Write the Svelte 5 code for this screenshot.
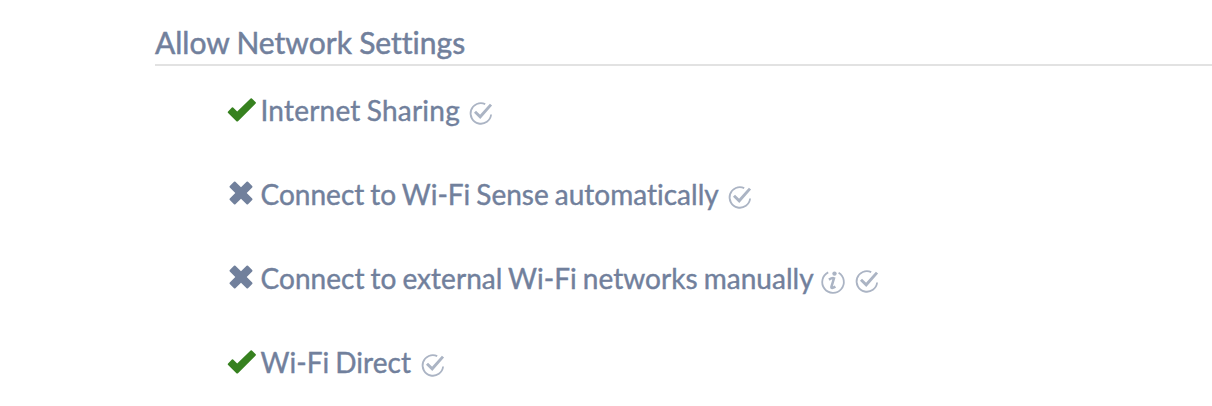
<script>
	const title = 'Allow Network Settings';

	let settings = [
		{ label: 'Internet Sharing', tracking: 0.22, allowed: true, info: false },
		{ label: 'Connect to Wi-Fi Sense automatically', tracking: 0.01, allowed: false, info: false },
		{ label: 'Connect to external Wi-Fi networks manually', tracking: 0.04, allowed: false, info: true },
		{ label: 'Wi-Fi Direct', tracking: 0.05, allowed: true, info: false }
	];
</script>

<section>
	<h2>{title}</h2>
	<ul>
		{#each settings as setting (setting.label)}
			<li>
				{#if setting.allowed}
					<svg class="state yes" viewBox="0 0 32 28">
						<path d="M1.1 15.4 4.9 11.6Q5.5 11.1 6.1 11.6L10.2 15.4 23.6 2.5Q24.3 1.9 24.9 2.5L28.7 6.2Q29.2 6.8 28.7 7.4L11 25.2Q10.2 26 9.4 25.2L1.1 16.9Q.4 16.1 1.1 15.4Z" />
					</svg>
				{:else}
					<svg class="state no" viewBox="0 0 32 28">
						<path d="M7 1.8Q7.7 1.1 8.4 1.8L14 7.3 19.6 1.8Q20.3 1.1 21 1.8L25.2 6Q25.9 6.7 25.2 7.4L19.7 13 25.2 18.6Q25.9 19.3 25.2 20L21 24.2Q20.3 24.9 19.6 24.2L14 18.7 8.4 24.2Q7.7 24.9 7 24.2L2.8 20Q2.1 19.3 2.8 18.6L8.3 13 2.8 7.4Q2.1 6.7 2.8 6Z" />
					</svg>
				{/if}
				<span class="label" style="letter-spacing: {setting.tracking}px">{setting.label}</span>
				{#if setting.info}
					<svg class="hint info" viewBox="0 0 24 24">
						<path class="ring" d="M7.2 2.4A10.8 10.8 0 1 0 17.6 2.8" />
						<circle cx="13.5" cy="3.6" r="2.2" />
						<path class="stem" d="M7.9 9.6Q11.3 7.6 13 8.3L10.4 16.8Q10 19.2 14.4 16.6" />
					</svg>
				{/if}
				<svg class="hint" viewBox="0 0 24 24">
					<path class="ring" d="M16.2 2.1A10.3 10.3 0 1 0 22.1 12.5" />
					<path class="tick" d="M6 9.8 11.2 14.8 22 2.6" />
				</svg>
			</li>
		{/each}
	</ul>
</section>

<style>
	:global(body) {
		background: #fff;
	}

	section {
		padding: 25px 0 0 155px;
		font-family: Lato, "Open Sans", sans-serif;
		font-variant-ligatures: none;
		color: #71809c;
	}

	h2 {
		margin: 0;
		height: 39px;
		border-bottom: 2px solid #e2e2e2;
		font-size: 30px;
		line-height: 34px;
		font-weight: 400;
		word-spacing: -0.4px;
		-webkit-text-stroke: 0.5px #71809c;
		white-space: nowrap;
	}

	ul {
		margin: 0;
		padding: 24px 0 0 72px;
		list-style: none;
	}

	li {
		display: flex;
		align-items: flex-start;
		height: 42px;
		margin-bottom: 42px;
		white-space: nowrap;
	}

	.label {
		margin: 2px 9.5px 0 1.5px;
		font-size: 28px;
		line-height: 36px;
		word-spacing: -1.2px;
		-webkit-text-stroke: 0.4px #71809c;
	}

	.state {
		flex: none;
		width: 32px;
		height: 28px;
		margin-top: 6px;
	}

	.yes {
		fill: #36811f;
	}

	.no {
		fill: #71809c;
	}

	.hint {
		flex: none;
		width: 24px;
		height: 24px;
		margin-top: 12px;
		fill: none;
		stroke: #abb4c4;
		overflow: visible;
	}

	.info {
		margin-right: 10px;
		margin-left: -2px;
	}

	.ring {
		stroke-width: 1.8;
	}

	.tick {
		stroke-width: 2.9;
	}

	.stem {
		stroke-width: 2.5;
	}

	circle {
		fill: #abb4c4;
		stroke: none;
	}
</style>
